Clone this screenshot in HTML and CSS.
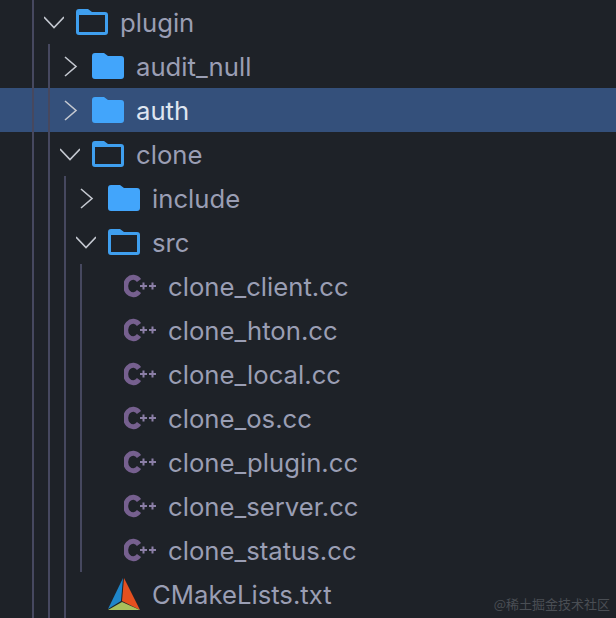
FILE: index.html
```html
<!DOCTYPE html>
<html lang="en">
<head>
    <meta charset="UTF-8">
    <meta name="viewport" content="width=device-width, initial-scale=1.0">
    <title>Project tree</title>
    <link rel="stylesheet" href="styles.css">
</head>
<body>
<svg class="defs" width="0" height="0">
    <symbol id="chevron-right" viewBox="0 0 20 24"><path d="M5 3 L16 12.500 L5 22" fill="none" stroke="currentColor" stroke-width="1.6"/></symbol>
    <symbol id="chevron-down" viewBox="0 0 20 24"><path d="M0 7 L10 17.500 L20 7" fill="none" stroke="currentColor" stroke-width="1.6"/></symbol>
    <symbol id="folder" viewBox="0 0 32 26"><path d="M0 3a3 3 0 0 1 3-3h9l4 3h13a3 3 0 0 1 3 3v17a3 3 0 0 1-3 3H3a3 3 0 0 1-3-3z" fill="#42a5fb"/></symbol>
    <symbol id="folder-open" viewBox="0 0 32 26"><path fill-rule="evenodd" d="M0 3a3 3 0 0 1 3-3h9l4 3h13a3 3 0 0 1 3 3v17a3 3 0 0 1-3 3H3a3 3 0 0 1-3-3zM3 6v17h26V6z" fill="#3f9fef"/></symbol>
    <symbol id="cpp" viewBox="0 0 32 24">
        <path d="M15 6.500A7.500 8.750 0 1 0 15 17.500" fill="none" stroke="#76608f" stroke-width="5"/>
        <path d="M16 12h7M19.500 8.500v7M25 12h7M28.500 8.500v7" fill="none" stroke="#8b7fa6" stroke-width="2"/>
    </symbol>
    <symbol id="cmake" viewBox="0 0 32 32">
        <path d="M15 0 L0 31 L13 23z" fill="#1f86c9"/>
        <path d="M16 0 L32 32 L14 23z" fill="#e5501f"/>
        <path d="M0 32 L14 24 L32 32z" fill="#a8bf5c"/>
    </symbol>
</svg>

<div class="tree">
    <div class="row">
        <span class="guide"></span>
        <span class="slot"><svg class="chevron down"><use href="#chevron-down"/></svg></span>
        <svg class="folder"><use href="#folder-open"/></svg>
        <span class="name">plugin</span>
    </div>
    <div class="row">
        <span class="guide"></span><span class="guide"></span>
        <span class="slot"><svg class="chevron"><use href="#chevron-right"/></svg></span>
        <svg class="folder"><use href="#folder"/></svg>
        <span class="name">audit_null</span>
    </div>
    <div class="row selected">
        <span class="guide"></span><span class="guide"></span>
        <span class="slot"><svg class="chevron"><use href="#chevron-right"/></svg></span>
        <svg class="folder"><use href="#folder"/></svg>
        <span class="name">auth</span>
    </div>
    <div class="row">
        <span class="guide"></span><span class="guide"></span>
        <span class="slot"><svg class="chevron down"><use href="#chevron-down"/></svg></span>
        <svg class="folder"><use href="#folder-open"/></svg>
        <span class="name">clone</span>
    </div>
    <div class="row">
        <span class="guide"></span><span class="guide"></span><span class="guide"></span>
        <span class="slot"><svg class="chevron"><use href="#chevron-right"/></svg></span>
        <svg class="folder"><use href="#folder"/></svg>
        <span class="name">include</span>
    </div>
    <div class="row">
        <span class="guide"></span><span class="guide"></span><span class="guide"></span>
        <span class="slot"><svg class="chevron down"><use href="#chevron-down"/></svg></span>
        <svg class="folder"><use href="#folder-open"/></svg>
        <span class="name">src</span>
    </div>
    <div class="row">
        <span class="guide"></span><span class="guide"></span><span class="guide"></span><span class="guide"></span>
        <span class="slot"></span>
        <svg class="file"><use href="#cpp"/></svg>
        <span class="name">clone_client.cc</span>
    </div>
    <div class="row">
        <span class="guide"></span><span class="guide"></span><span class="guide"></span><span class="guide"></span>
        <span class="slot"></span>
        <svg class="file"><use href="#cpp"/></svg>
        <span class="name">clone_hton.cc</span>
    </div>
    <div class="row">
        <span class="guide"></span><span class="guide"></span><span class="guide"></span><span class="guide"></span>
        <span class="slot"></span>
        <svg class="file"><use href="#cpp"/></svg>
        <span class="name">clone_local.cc</span>
    </div>
    <div class="row">
        <span class="guide"></span><span class="guide"></span><span class="guide"></span><span class="guide"></span>
        <span class="slot"></span>
        <svg class="file"><use href="#cpp"/></svg>
        <span class="name">clone_os.cc</span>
    </div>
    <div class="row">
        <span class="guide"></span><span class="guide"></span><span class="guide"></span><span class="guide"></span>
        <span class="slot"></span>
        <svg class="file"><use href="#cpp"/></svg>
        <span class="name">clone_plugin.cc</span>
    </div>
    <div class="row">
        <span class="guide"></span><span class="guide"></span><span class="guide"></span><span class="guide"></span>
        <span class="slot"></span>
        <svg class="file"><use href="#cpp"/></svg>
        <span class="name">clone_server.cc</span>
    </div>
    <div class="row">
        <span class="guide"></span><span class="guide"></span><span class="guide"></span><span class="guide"></span>
        <span class="slot"></span>
        <svg class="file"><use href="#cpp"/></svg>
        <span class="name">clone_status.cc</span>
    </div>
    <div class="row">
        <span class="guide"></span><span class="guide"></span><span class="guide"></span>
        <span class="slot"></span>
        <svg class="file cmake"><use href="#cmake"/></svg>
        <span class="name">CMakeLists.txt</span>
    </div>
    <div class="row tail">
        <span class="guide"></span><span class="guide"></span><span class="guide"></span>
    </div>
</div>

<div class="watermark">@稀土掘金技术社区</div>
</body>
</html>
```

FILE: styles.css
```css
html, body {
    height: 100%;
}
body {
    font-family: Inter, "Liberation Sans", sans-serif;
    background-color: #1e2228;
    margin: 0;
    overflow: hidden;
    position: relative;
}
.defs {
    display: block;
    height: 0;
}
.row {
    display: flex;
    align-items: center;
    height: 44px;
    padding-left: 32px;
    color: #9a9eb4;
}
.row.selected {
    background-color: #34507b;
    color: #dfe5f0;
}
.row.tail {
    height: 2px;
}
.guide {
    flex: none;
    box-sizing: border-box;
    width: 16px;
    height: 100%;
    border-left: 2px solid #46485f;
}
.slot {
    flex: none;
    display: flex;
    width: 28px;
}
.chevron {
    flex: none;
    width: 20px;
    height: 24px;
    margin-left: -4px;
    color: #c4c8d0;
}
.folder {
    flex: none;
    width: 32px;
    height: 26px;
    margin-right: 12px;
}
.file {
    flex: none;
    width: 32px;
    height: 24px;
    margin-right: 12px;
}
.file.cmake {
    height: 32px;
}
.name {
    font-size: 25.7px;
    line-height: 44px;
    margin-top: 2px;
    white-space: nowrap;
}
.watermark {
    position: absolute;
    right: 6px;
    bottom: 5px;
    font-family: "Noto Sans CJK SC", sans-serif;
    font-size: 13px;
    color: #4a4e54;
}
```
